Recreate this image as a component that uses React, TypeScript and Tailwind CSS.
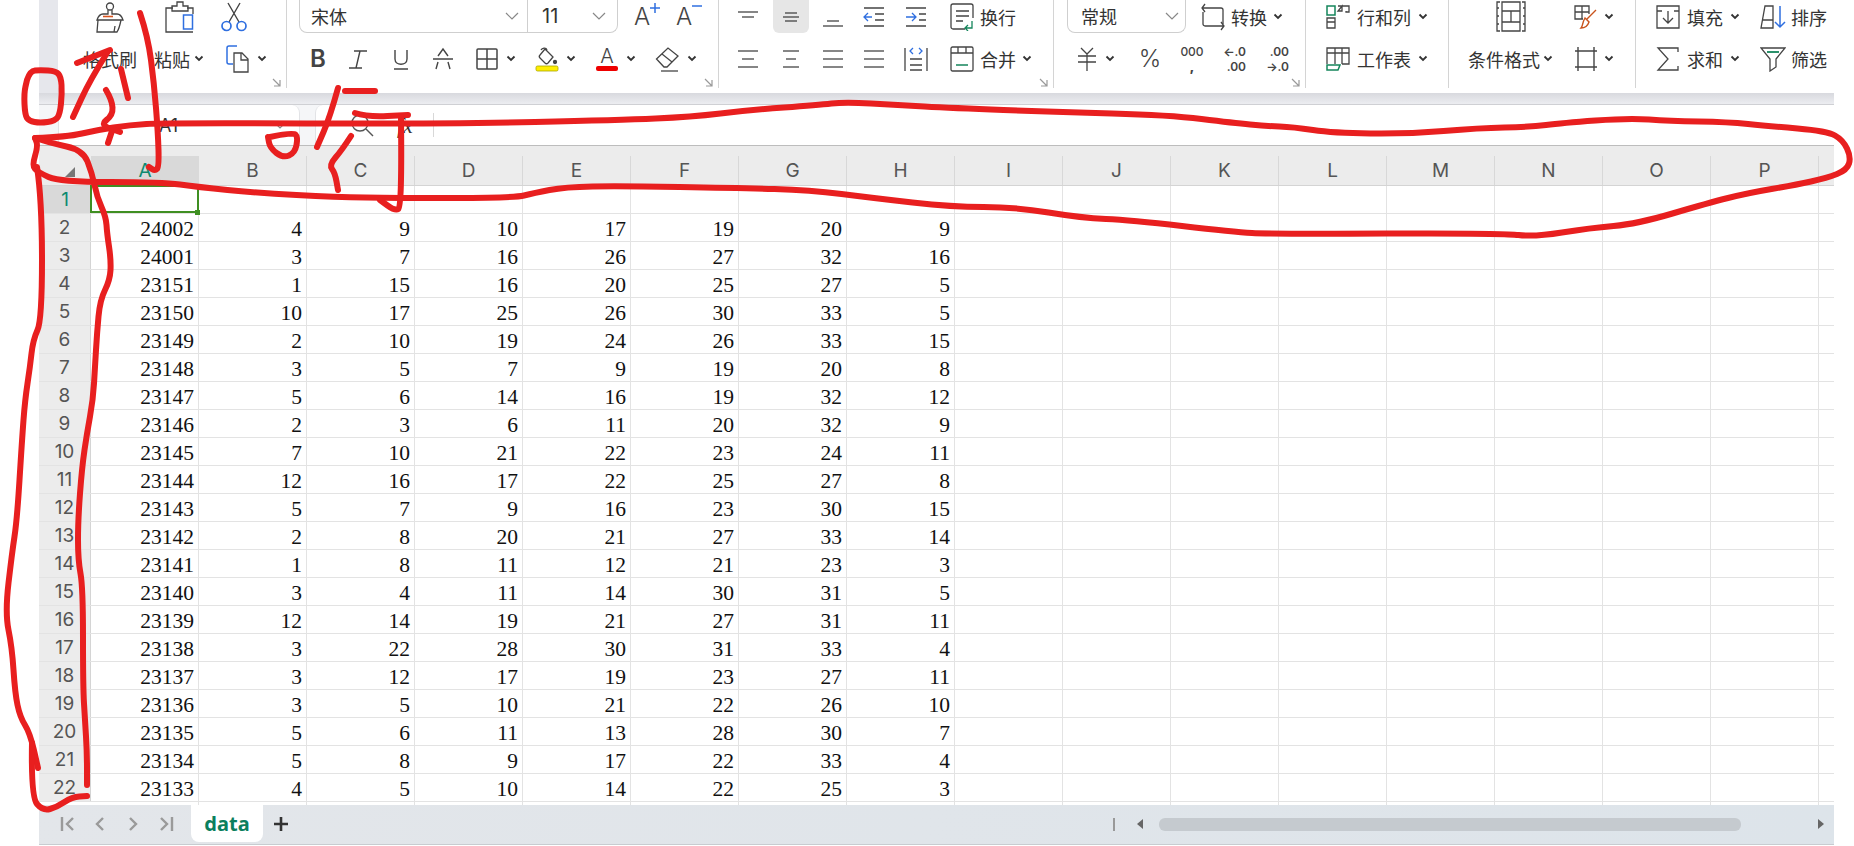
import type { ReactNode } from "react";

const UI_FONT = "[font-family:'Noto_Sans_CJK_SC','Noto_Sans',sans-serif]";
const COLUMNS = "ABCDEFGHIJKLMNOP".split("");
const ROWS: number[][] = [
  [24002, 4, 9, 10, 17, 19, 20, 9],
  [24001, 3, 7, 16, 26, 27, 32, 16],
  [23151, 1, 15, 16, 20, 25, 27, 5],
  [23150, 10, 17, 25, 26, 30, 33, 5],
  [23149, 2, 10, 19, 24, 26, 33, 15],
  [23148, 3, 5, 7, 9, 19, 20, 8],
  [23147, 5, 6, 14, 16, 19, 32, 12],
  [23146, 2, 3, 6, 11, 20, 32, 9],
  [23145, 7, 10, 21, 22, 23, 24, 11],
  [23144, 12, 16, 17, 22, 25, 27, 8],
  [23143, 5, 7, 9, 16, 23, 30, 15],
  [23142, 2, 8, 20, 21, 27, 33, 14],
  [23141, 1, 8, 11, 12, 21, 23, 3],
  [23140, 3, 4, 11, 14, 30, 31, 5],
  [23139, 12, 14, 19, 21, 27, 31, 11],
  [23138, 3, 22, 28, 30, 31, 33, 4],
  [23137, 3, 12, 17, 19, 23, 27, 11],
  [23136, 3, 5, 10, 21, 22, 26, 10],
  [23135, 5, 6, 11, 13, 28, 30, 7],
  [23134, 5, 8, 9, 17, 22, 33, 4],
  [23133, 4, 5, 10, 14, 22, 25, 3],
];

// pen strokes on top of the screenshot
const STROKES: number[][][] = [
  [
    [35, 138], [67, 137], [97, 130], [130, 125], [163, 123], [450, 124], [620, 120], [691, 117], [750, 110],
    [818, 105], [845, 102], [897, 105], [952, 108], [1055, 112], [1169, 115], [1234, 123], [1266, 126],
    [1293, 127], [1333, 133], [1408, 134], [1479, 128], [1530, 127], [1562, 123], [1629, 118], [1669, 121],
    [1728, 122], [1768, 126], [1827, 131], [1843, 140], [1851, 157], [1847, 170], [1827, 178], [1795, 185],
    [1748, 193], [1708, 203], [1637, 224], [1590, 228], [1534, 237], [1503, 233], [1270, 234], [1234, 232],
    [1130, 220], [1082, 218], [1015, 207], [952, 207], [873, 198], [810, 190], [739, 188], [620, 186],
    [565, 187], [534, 193], [514, 198], [395, 198], [336, 197], [257, 193], [198, 187], [162, 182], [59, 182],
    [38, 172], [32, 166], [38, 146], [35, 138],
  ],
  [
    [35, 138], [50, 143], [83, 150], [92, 173], [97, 197], [106, 217], [107, 233], [111, 260], [110, 280],
    [100, 300], [97, 333], [95, 367], [93, 400], [87, 433], [82, 467], [78, 520], [78, 560], [83, 587],
    [83, 687], [85, 720], [87, 753], [87, 785],
  ],
  [
    [37, 167], [42, 200], [42, 320], [33, 340], [30, 367], [25, 400], [22, 440], [17, 520], [12, 553], [5, 613],
    [12, 647], [15, 693], [20, 717], [30, 733], [38, 768],
  ],
  [[32, 743], [31, 797], [43, 811], [57, 807], [72, 797], [87, 796]],
  [[27, 80], [30, 71], [40, 70], [56, 71], [61, 77], [62, 93], [60, 114], [55, 121], [40, 123], [29, 121], [25, 115], [24, 93], [27, 80]],
  [[77, 63], [110, 50]],
  [[107, 53], [90, 80], [73, 117]],
  [[121, 69], [128, 98]],
  [[106, 90], [112, 100], [113, 115], [100, 125], [120, 132]],
  [[113, 128], [108, 143]],
  [[140, 13], [148, 37], [154, 83], [158, 133], [159, 167], [155, 171], [149, 167]],
  [[338, 88], [330, 117], [317, 147]],
  [[345, 91], [375, 91]],
  [[351, 136], [342, 150], [329, 165], [335, 173], [338, 190]],
  [[355, 113], [367, 117], [408, 115]],
  [[401, 117], [402, 207], [395, 211], [380, 200]],
  [[270, 137], [293, 132], [298, 137], [295, 153], [283, 158], [270, 148], [268, 137]],
];

function smooth(pts: number[][]) {
  if (pts.length < 3) return `M${pts[0][0]} ${pts[0][1]}L${pts[1][0]} ${pts[1][1]}`;
  let d = `M${pts[0][0]} ${pts[0][1]}`;
  for (let i = 1; i < pts.length - 1; i++) {
    const mx = (pts[i][0] + pts[i + 1][0]) / 2;
    const my = (pts[i][1] + pts[i + 1][1]) / 2;
    d += `Q${pts[i][0]} ${pts[i][1]} ${mx} ${my}`;
  }
  const last = pts[pts.length - 1];
  return `${d}L${last[0]} ${last[1]}`;
}

function Chev({ className = "" }: { className?: string }) {
  return (
    <svg width="10" height="7" viewBox="0 0 10 7" className={`shrink-0 ${className}`}>
      <path d="M1.5 1.5 5 5l3.5-3.5" fill="none" stroke="#333" strokeWidth="1.8" />
    </svg>
  );
}

function ThinChev({ className = "" }: { className?: string }) {
  return (
    <svg width="14" height="8" viewBox="0 0 14 8" className={`shrink-0 ${className}`}>
      <path d="M1 1l6 6 6-6" fill="none" stroke="#888" strokeWidth="1.2" />
    </svg>
  );
}

function Corner({ className }: { className: string }) {
  return (
    <svg width="9" height="9" viewBox="0 0 9 9" className={`absolute ${className}`}>
      <path d="M1 1l7 7M8 2v6H2" fill="none" stroke="#999" strokeWidth="1.2" />
    </svg>
  );
}

function Icon({ w = 24, h = 24, className = "", children }: { w?: number; h?: number; className?: string; children: ReactNode }) {
  return (
    <svg
      width={w}
      height={h}
      viewBox={`0 0 ${w} ${h}`}
      fill="none"
      stroke="#444"
      strokeWidth="1.3"
      className={`shrink-0 ${className}`}
    >
      {children}
    </svg>
  );
}

function Lines({ rows, className }: { rows: [number, number, string?][]; className?: string }) {
  return (
    <Icon w={22} h={24} className={className}>
      {rows.map(([y, inset, color], i) => (
        <path key={i} d={`M${1 + inset} ${y}H${21 - inset}`} stroke={color ?? "#444"} />
      ))}
    </Icon>
  );
}

function Label({ children, className = "" }: { children: ReactNode; className?: string }) {
  return <span className={`text-[18px] leading-none whitespace-nowrap text-[#333] ${className}`}>{children}</span>;
}

function Row({ children }: { children: ReactNode }) {
  return <div className="flex items-center h-[33px]">{children}</div>;
}

function Group({ className, children }: { className: string; children: ReactNode }) {
  return <div className={`relative flex flex-col gap-[9px] h-[88px] shrink-0 ${className}`}>{children}</div>;
}

function Ribbon() {
  return (
    <div className={`flex h-[93px] ml-[19px] bg-white rounded-bl-lg overflow-hidden ${UI_FONT}`}>
      <Group className="w-[229px] border-r border-[#d4d4d4]">
        <Row>
          <Icon w={30} h={33} className="ml-[37px]">
            <circle cx="15" cy="6.500" r="3.500" />
            <path d="M13 10v4H8c-3 0-5 3-6 6h26c-1-3-3-6-6-6h-5v-4" />
            <path d="M8 16.500h10" stroke="#d9541e" strokeWidth="1.600" />
            <path d="M3 20L2 32h20c2-3 3-7 4-12M19 32l1-6" />
          </Icon>
          <Icon w={30} h={33} className="ml-[40px]">
            <path d="M8 8H1v24h27" />
            <path d="M22 8h6v6" />
            <path d="M7 11V6h5V2h6v4h5v5z" />
            <rect x="18.500" y="15" width="9" height="14" stroke="#2f6fe0" strokeWidth="1.500" />
          </Icon>
          <Icon w={28} h={30} className="ml-[25px]">
            <path d="M8 1l11 19M20 1L9 20" strokeWidth="1.400" />
            <circle cx="6.500" cy="24" r="4.500" stroke="#2f6fe0" strokeWidth="1.700" />
            <circle cx="21.500" cy="24" r="4.500" stroke="#2f6fe0" strokeWidth="1.700" />
          </Icon>
        </Row>
        <Row>
          <Label className="ml-[25px]">格式刷</Label>
          <Label className="ml-[17px]">粘贴</Label>
          <Chev className="ml-[4px]" />
          <Icon w={24} h={28} className="ml-[22px]">
            <path d="M11 1H3a2 2 0 0 0-2 2v14a2 2 0 0 0 2 2h4" stroke="#2f6fe0" strokeWidth="1.500" />
            <path d="M8 8h8l6 6v13H8z" />
            <path d="M15 8v7h7" />
          </Icon>
          <Chev className="ml-[7px]" />
        </Row>
        <Corner className="right-[5px] bottom-[1px]" />
      </Group>

      <Group className="w-[432px] border-r border-[#d4d4d4]">
        <Row>
          <div className="flex items-center w-[319px] h-[33px] ml-[12px] border border-t-0 border-[#cfcfcf] rounded-b-lg">
            <div className="flex items-center justify-between w-[228px] h-full pl-[11px] pr-[8px] border-r border-[#cfcfcf]">
              <Label className="text-[#222]">宋体</Label>
              <ThinChev />
            </div>
            <span className="ml-[14px] w-[22px] text-[20px] leading-none text-[#333] [font-family:Inter,sans-serif]">11</span>
            <ThinChev className="ml-[28px]" />
          </div>
          <span className="flex items-start w-[26px] ml-[16px] [font-family:Inter,sans-serif]">
            <span className="text-[24px] leading-[28px] font-light text-[#444]">A</span>
            <svg width="10" height="10" viewBox="0 0 10 10" stroke="#2f6fe0" strokeWidth="1.500" className="shrink-0">
              <path d="M5 0v10M0 5h10" />
            </svg>
          </span>
          <span className="flex items-start w-[26px] ml-[16px] [font-family:Inter,sans-serif]">
            <span className="text-[24px] leading-[28px] font-light text-[#444]">A</span>
            <svg width="10" height="10" viewBox="0 0 10 10" stroke="#2f6fe0" strokeWidth="1.500" className="shrink-0">
              <path d="M0 3h10" />
            </svg>
          </span>
        </Row>
        <Row>
          <span className="ml-[21px] w-[20px] text-center text-[24px] font-semibold leading-none text-[#444] [font-family:Inter,sans-serif]">B</span>
          <Icon w={20} h={24} className="ml-[20px]">
            <path d="M6 4h13M12 4L8 21M1 21h13" strokeWidth="1.400" />
          </Icon>
          <Icon w={20} h={24} className="ml-[23px]">
            <path d="M4 3v9c0 7 12 7 12 0V3M3 22h14" strokeWidth="1.400" />
          </Icon>
          <Icon w={24} h={24} className="ml-[20px]">
            <path d="M7 9l5-7 5 7M2 12h20M7 15l-2 7M17 15l2 7" strokeWidth="1.400" />
          </Icon>
          <Icon w={22} h={22} className="ml-[21px]">
            <rect x="1" y="1" width="20" height="20" rx="1" strokeWidth="1.500" />
            <path d="M11 1v20M1 11h20" strokeWidth="1.500" />
          </Icon>
          <Chev className="ml-[8px]" />
          <Icon w={24} h={26} className="ml-[19px]">
            <path d="M10 3l8 8-5 6c-1 1-2 1-3 0l-5-5c-1-1-1-2 0-3z" />
            <path d="M6 4c1-2 5-3 6 0" />
            <circle cx="20" cy="16" r="1.500" fill="#444" />
            <rect x="1" y="20" width="22" height="5" rx="1.500" fill="#ffee00" stroke="#a8a400" strokeWidth=".8" />
          </Icon>
          <Chev className="ml-[7px]" />
          <span className="flex flex-col items-center w-[24px] ml-[19px] [font-family:Inter,sans-serif]">
            <span className="text-[20px] leading-[19px] font-light text-[#444]">A</span>
            <span className="w-[22px] h-[5px] rounded-[2px] bg-[#ee0000]" />
          </span>
          <Chev className="ml-[7px]" />
          <Icon w={26} h={26} className="ml-[19px]">
            <path d="M1.500 13L13 2l10 8-11 11h-3z" />
            <path d="M7 8l10 8" />
            <path d="M6 25h17" />
          </Icon>
          <Chev className="ml-[6px]" />
        </Row>
        <Corner className="right-[5px] bottom-[1px]" />
      </Group>

      <Group className="w-[335px] border-r border-[#d4d4d4]">
        <Row>
          <Lines className="ml-[18px]" rows={[[7, 0], [12, 4]]} />
          <div className="flex items-center justify-center w-[36px] h-[33px] ml-[14px] rounded-b-md bg-[#e6e6e6]">
            <Lines rows={[[8, 4], [12, 2], [16, 4]]} />
          </div>
          <Lines className="ml-[13px]" rows={[[16, 4], [21, 0]]} />
          <Icon w={22} h={24} className="ml-[19px]">
            <path d="M1 3h20M1 21h20M12 9h9M12 15h9" />
            <path d="M9 12H1M5 8l-4 4 4 4" stroke="#2f6fe0" />
          </Icon>
          <Icon w={22} h={24} className="ml-[20px]">
            <path d="M1 3h20M1 21h20M14 9h7M14 15h7" />
            <path d="M1 12h10M7 8l4 4-4 4" stroke="#2f6fe0" />
          </Icon>
          <Icon w={24} h={28} className="ml-[23px]">
            <path d="M15 26H3a2 2 0 0 1-2-2V3a2 2 0 0 1 2-2h18a2 2 0 0 1 2 2v12" />
            <path d="M6 8h13M6 13h13M6 18h7" />
            <path d="M22 18v7h-6M18 22l-3 3 3 3" stroke="#14855b" />
          </Icon>
          <Label className="ml-[6px]">换行</Label>
        </Row>
        <Row>
          <Lines className="ml-[18px]" rows={[[4, 0], [12, 4], [20, 0]]} />
          <Lines className="ml-[21px]" rows={[[4, 2], [12, 5], [20, 2]]} />
          <Lines className="ml-[20px]" rows={[[4, 0], [12, 0], [20, 0]]} />
          <Lines className="ml-[19px]" rows={[[4, 0], [12, 0], [20, 0]]} />
          <Icon w={24} h={26} className="ml-[19px]">
            <path d="M1 2v23M23 2v23M6 13h12M6 19h12M6 24h12" />
            <path d="M9 2L6 5l3 3M15 2l3 3-3 3" stroke="#2f6fe0" />
          </Icon>
          <Icon w={24} h={26} className="ml-[22px]">
            <rect x="1" y="1" width="22" height="24" rx="1.500" />
            <path d="M1 7h22M8 1v6M16 1v6" />
            <path d="M6 19h12" stroke="#14855b" strokeWidth="1.500" />
          </Icon>
          <Label className="ml-[6px]">合并</Label>
          <Chev className="ml-[6px]" />
        </Row>
        <Corner className="right-[5px] bottom-[1px]" />
      </Group>

      <Group className="w-[252px] border-r border-[#d4d4d4]">
        <Row>
          <div className="flex items-center justify-between w-[119px] h-[33px] ml-[13px] pl-[13px] pr-[6px] border border-t-0 border-[#cfcfcf] rounded-b-lg">
            <Label className="text-[#222]">常规</Label>
            <ThinChev />
          </div>
          <Icon w={24} h={28} className="ml-[15px]">
            <path d="M1 5h19a2 2 0 0 1 2 2v14M4 1L1 5l3 4" />
            <path d="M23 23H4a2 2 0 0 1-2-2V9M20 19l3 4-3 4" />
          </Icon>
          <Label className="ml-[6px]">转换</Label>
          <Chev className="ml-[6px]" />
        </Row>
        <Row>
          <Icon w={20} h={24} className="ml-[23px]">
            <path d="M4 1l6 6 6-6M1 9h18M1 15h18M10 7v17" />
          </Icon>
          <Chev className="ml-[8px]" />
          <span className="ml-[23px] w-[24px] text-center text-[24px] leading-none font-light text-[#444] [font-family:Inter,sans-serif]">%</span>
          <div className="ml-[18px] w-[24px] flex flex-col items-center text-[12px] leading-[15px] font-medium text-[#444] [font-family:Inter,sans-serif]">
            <span>000</span>
            <span className="font-black">,</span>
          </div>
          <div className="ml-[18px] w-[24px] flex flex-col items-end text-[12px] leading-[15px] font-semibold text-[#444] [font-family:Inter,sans-serif]">
            <span>←.0</span>
            <span>.00</span>
          </div>
          <div className="ml-[19px] w-[24px] flex flex-col items-end text-[12px] leading-[15px] font-semibold text-[#444] [font-family:Inter,sans-serif]">
            <span>.00</span>
            <span>→.0</span>
          </div>
        </Row>
        <Corner className="right-[5px] bottom-[1px]" />
      </Group>

      <Group className="w-[143px] border-r border-[#d4d4d4]">
        <Row>
          <Icon w={24} h={26} className="ml-[20px]">
            <rect x="1" y="2" width="8" height="9" stroke="#14855b" strokeWidth="1.500" />
            <path d="M12 2h11v6h-3v-1M16 2v5h-4zM1 14h8v10H1zM1 18h8" />
          </Icon>
          <Label className="ml-[7px]">行和列</Label>
          <Chev className="ml-[7px]" />
        </Row>
        <Row>
          <Icon w={24} h={26} className="ml-[20px]">
            <path d="M1 18V2h22v16h-7M1 7h22M9 2v16M16 2v16" />
            <path d="M1 19h13l-2 5H1z" stroke="#14855b" strokeWidth="1.500" />
          </Icon>
          <Label className="ml-[7px]">工作表</Label>
          <Chev className="ml-[7px]" />
        </Row>
      </Group>

      <Group className="w-[187px] border-r border-[#d4d4d4]">
        <Row>
          <Icon w={30} h={32} className="ml-[47px]">
            <path d="M4 1H1v29h3M1 7h2M1 15h2M1 23h2M26 1h3v29h-3M27 7h2M27 15h2M27 23h2" />
            <path d="M6 1h18v29H6zM6 10h18M6 21h18M15 10v11" />
          </Icon>
          <Icon w={24} h={26} className="ml-[48px]">
            <path d="M9 15H1V2h14v8M1 8h14M8 2v13" />
            <path d="M22 6L13 15M11 14l4 4c-1 3-3 6-8 6 2-2 1-5 4-10z" stroke="#c9531c" strokeWidth="1.400" />
          </Icon>
          <Chev className="ml-[6px]" />
        </Row>
        <Row>
          <Label className="ml-[19px]">条件格式</Label>
          <Chev className="ml-[3px]" />
          <Icon w={24} h={26} className="ml-[21px]">
            <path d="M1 5h22M1 21h22M4 1v24M20 1v24" strokeWidth="1.400" />
          </Icon>
          <Chev className="ml-[6px]" />
        </Row>
      </Group>

      <Group className="w-[198px]">
        <Row>
          <Icon w={24} h={26} className="ml-[20px]">
            <path d="M1 2h22v22H1zM1 7h5M18 7h5" />
            <path d="M12 7v12M7 14l5 5 5-5" />
          </Icon>
          <Label className="ml-[7px]">填充</Label>
          <Chev className="ml-[7px]" />
          <Icon w={26} h={26} className="ml-[20px]">
            <path d="M5 2h8v22H1zM3 16h10" />
            <path d="M20 2v21M15 18l5 5 5-5" stroke="#2f6fe0" strokeWidth="1.500" />
          </Icon>
          <Label className="ml-[5px]">排序</Label>
        </Row>
        <Row>
          <Icon w={24} h={26} className="ml-[20px]">
            <path d="M22 6V2H2l10 11L2 24h20v-4" />
          </Icon>
          <Label className="ml-[7px]">求和</Label>
          <Chev className="ml-[7px]" />
          <Icon w={26} h={26} className="ml-[20px]">
            <path d="M1 2h24l-9 11v8l-6 4V13z" />
            <path d="M7 6h12" stroke="#14855b" strokeWidth="1.800" />
          </Icon>
          <Label className="ml-[5px]">筛选</Label>
        </Row>
      </Group>
    </div>
  );
}

function FormulaBar() {
  return (
    <div className="flex h-[40px] bg-[#f5f6f8] pl-[19px] gap-[15px]">
      <div className="flex items-center justify-between w-[242px] pl-[100px] pr-[12px] bg-white rounded-t-lg border-x border-[#e2e3e6] text-[18px] text-[#333] [font-family:Inter,sans-serif]">
        <span>A1</span>
        <ThinChev />
      </div>
      <div className="flex items-center flex-1 pl-[34px] bg-white rounded-tl-lg border-l border-[#e2e3e6]">
        <svg width="24" height="24" viewBox="0 0 24 24" fill="none" stroke="#555" strokeWidth="1.400">
          <circle cx="10" cy="10" r="8" />
          <path d="M16 16l7 7" />
        </svg>
        <span className="ml-[23px] text-[22px] italic text-[#333] [font-family:'Liberation_Serif',serif]">fx</span>
        <span className="ml-[20px] h-[24px] w-px bg-[#d8d8d8]" />
      </div>
    </div>
  );
}

function Sheet() {
  return (
    <div className="flex flex-col flex-1 min-h-0 overflow-hidden bg-white border-t border-[#bdbdbd]">
      <div className="flex h-[40px] shrink-0 bg-[#ececec] border-b border-[#d4d4d4]">
        <div className="relative w-[52px] shrink-0">
          <span className="absolute right-[16px] bottom-[8px] w-0 h-0 border-l-[10px] border-b-[10px] border-l-transparent border-b-[#777]" />
        </div>
        {COLUMNS.map((col, i) => (
          <div key={col} className={`flex items-center justify-center w-[108px] h-[29px] mt-[10px] shrink-0 text-[19px] leading-none [font-family:Inter,sans-serif] ${i === 0 ? "bg-[#d9d9d9] text-[#0e8a70]" : "border-r border-[#d8d8d8] text-[#555]"}`}>
            {col}
          </div>
        ))}
      </div>
      <div className="flex h-[28px] shrink-0 border-b border-[#e3e3e3]">
        <div className="flex items-center justify-center w-[52px] shrink-0 pt-[1px] bg-[#d9d9d9] text-[19px] text-[#0e8a70] [font-family:Inter,sans-serif]">1</div>
        <div className="relative w-[108px] shrink-0 border-r border-[#e3e3e3]">
          <div className="absolute -left-px -top-px w-[109px] h-[28px] border-2 border-[#3f8f22]" />
          <div className="absolute -right-[2px] -bottom-[2px] w-[5px] h-[5px] bg-[#3f8f22]" />
        </div>
        {COLUMNS.slice(1).map((col) => (
          <div key={col} className="w-[108px] shrink-0 border-r border-[#e3e3e3]" />
        ))}
      </div>
      {ROWS.map((row, r) => (
        <div key={r} className="flex h-[28px] shrink-0 border-b border-[#e3e3e3]">
          <div className="flex items-center justify-center w-[52px] shrink-0 pt-[1px] bg-[#ececec] border-r border-[#d4d4d4] text-[19px] text-[#555] [font-family:Inter,sans-serif]">
            {r + 2}
          </div>
          {COLUMNS.map((col, c) => (
            <div key={col} className="w-[108px] shrink-0 pr-[4px] pt-[3px] border-r border-[#e3e3e3] text-right text-[21.500px] leading-[25px] text-[#111] [font-family:'Liberation_Serif',serif]">
              {row[c]}
            </div>
          ))}
        </div>
      ))}
      <div className="flex flex-1 pl-[52px]">
        {COLUMNS.map((col) => (
          <div key={col} className="w-[108px] shrink-0 border-r border-[#e3e3e3]" />
        ))}
      </div>
    </div>
  );
}

function NavIcon({ d, className }: { d: string; className: string }) {
  return (
    <svg width="16" height="16" viewBox="0 0 16 16" fill="none" stroke="#9a9a9a" strokeWidth="2.400" className={`shrink-0 ${className}`}>
      <path d={d} />
    </svg>
  );
}

function TabBar() {
  return (
    <div className="flex items-start h-[40px] shrink-0 bg-gradient-to-r from-[#e3e6ea] to-[#dde4ea] border-b border-[#c8ccd0]">
      <div className="flex items-center h-[38px]">
        <NavIcon d="M2 1v14M13 2L7 8l6 6" className="ml-[21px]" />
        <NavIcon d="M11 2L5 8l6 6" className="ml-[16px]" />
        <NavIcon d="M5 2l6 6-6 6" className="ml-[17px]" />
        <NavIcon d="M3 2l6 6-6 6M14 1v14" className="ml-[17px]" />
      </div>
      <div className="flex items-center justify-center w-[72px] h-[37px] ml-[17px] bg-white rounded-b-lg text-[20px] font-bold text-[#0b7f5e] [font-family:'Noto_Sans',sans-serif]">
        data
      </div>
      <div className="flex items-center h-[38px] ml-[10px]">
        <svg width="16" height="16" viewBox="0 0 16 16" stroke="#333" strokeWidth="2.600">
          <path d="M8 1v14M1 8h14" />
        </svg>
      </div>
      <div className="flex items-center h-[38px] ml-auto mr-[10px]">
        <span className="w-[2px] h-[13px] bg-[#999]" />
        <span className="ml-[22px] w-0 h-0 border-y-[5px] border-r-[6px] border-y-transparent border-r-[#666]" />
        <span className="ml-[16px] w-[582px] h-[13px] rounded-[6px] bg-[#c5cacf]" />
        <span className="ml-[77px] w-0 h-0 border-y-[5px] border-l-[6px] border-y-transparent border-l-[#666]" />
      </div>
    </div>
  );
}

export default function App() {
  return (
    <div className="relative h-screen w-full overflow-hidden bg-white pl-[39px] pr-[20px] pb-[1px]">
      <div className="flex flex-col h-full bg-[#e6e7ec]">
        <Ribbon />
        <div className="h-[12px] shrink-0 bg-gradient-to-b from-[#d8d9de] to-[#ecedf1] border-b border-[#cfd0d4]" />
        <FormulaBar />
        <Sheet />
        <TabBar />
      </div>
      <svg width="1854" height="846" viewBox="0 0 1854 846" fill="none" className="absolute inset-0 pointer-events-none">
        {STROKES.map((pts, i) => (
          <path key={i} d={smooth(pts)} stroke="#e81f1f" strokeWidth="6" strokeLinecap="round" strokeLinejoin="round" />
        ))}
      </svg>
    </div>
  );
}
